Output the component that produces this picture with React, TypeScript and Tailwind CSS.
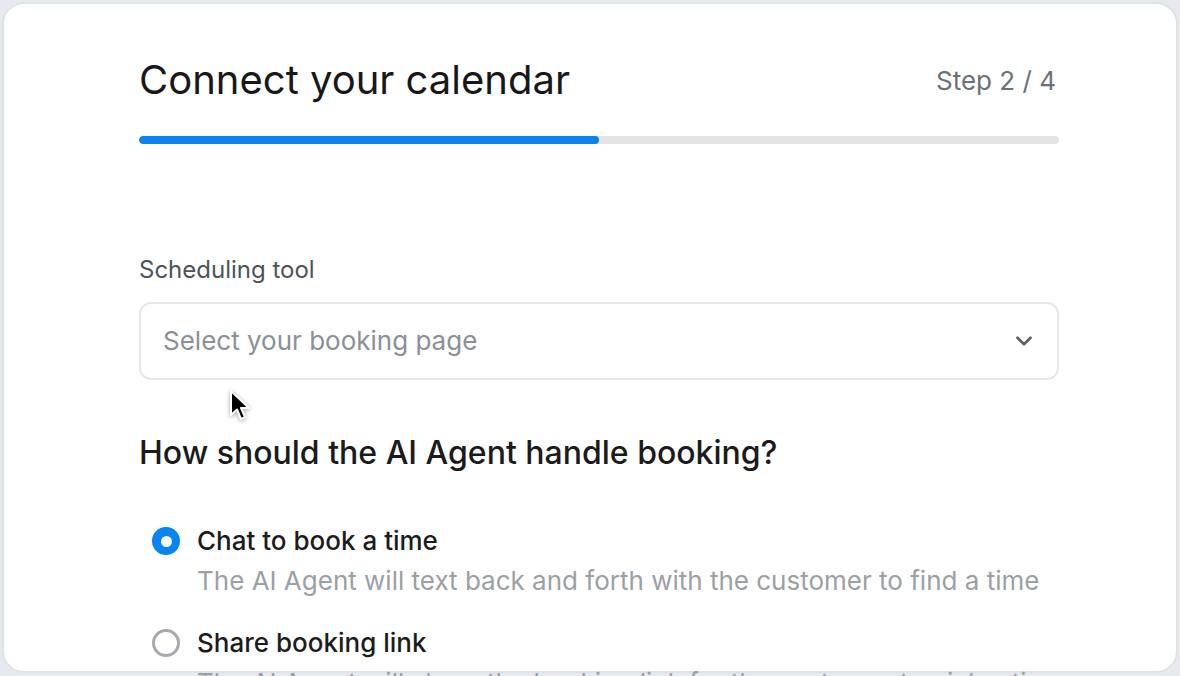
import React from 'react';
import { ChevronDown } from 'lucide-react';

type Option = {
  id: string;
  title: string;
  description: string;
};

const options: Option[] = [
  {
    id: 'chat',
    title: 'Chat to book a time',
    description: 'The AI Agent will text back and forth with the customer to find a time',
  },
  {
    id: 'link',
    title: 'Share booking link',
    description: 'The AI Agent will share the booking link for the customer to pick a time',
  },
];

function Radio({ checked }: { checked: boolean }) {
  if (checked) {
    return (
      <span className="flex h-[28px] w-[28px] shrink-0 items-center justify-center rounded-full bg-[#0a84f0]">
        <span className="h-[11px] w-[11px] rounded-full bg-white" />
      </span>
    );
  }
  return <span className="h-[28px] w-[28px] shrink-0 rounded-full border-[3px] border-[#a6aaae] bg-white" />;
}

function Cursor() {
  return (
    <svg
      className="pointer-events-none absolute left-[228px] top-[389px] drop-shadow-[0_1px_2px_rgba(0,0,0,0.35)]"
      width="26"
      height="34"
      viewBox="0 0 26 34"
    >
      <path
        d="M3 2 L3 26 L9 20.5 L13 30 L17 28.2 L13 19 L21 19 Z"
        fill="#000"
        stroke="#fff"
        strokeWidth="2"
        strokeLinejoin="round"
      />
    </svg>
  );
}

export default function App() {
  const [selected] = React.useState('chat');
  const step = 2;
  const total = 4;

  return (
    <div
      className="relative h-[676px] w-[1180px] overflow-hidden bg-[#e6eaef] p-[2px]"
      style={{ fontFamily: 'Inter, "Noto Sans", sans-serif' }}
    >
      <div className="h-[671px] rounded-[22px] border-2 border-[#dde3e9] bg-white pl-[135px] pt-[52px]">
        <div className="w-[920px]">
          <div className="flex items-center justify-between">
            <h1 className="text-[40px] leading-[48px] font-normal text-[#18181b]">Connect your calendar</h1>
            <span className="mr-[3px] mt-[2px] text-[26px] leading-[34px] text-[#6b7076]">
              Step {step} / {total}
            </span>
          </div>

          <div className="mt-[32px] h-[8px] w-full overflow-hidden rounded-full bg-[#e4e4e4]">
            <div className="h-full rounded-full bg-[#0a84f0]" style={{ width: `${(step / total) * 100}%` }} />
          </div>

          <label className="mt-[110px] block text-[24px] leading-[32px] text-[#4d535a]">Scheduling tool</label>
          <button className="mt-[16px] flex h-[78px] w-full items-center justify-between rounded-[12px] border-2 border-[#e6e7ea] bg-white pl-[22px] pr-[20px] text-left">
            <span className="text-[26px] leading-[34px] text-[#8a9098]">Select your booking page</span>
            <ChevronDown className="h-[26px] w-[26px] text-[#5b6066]" strokeWidth={2.4} />
          </button>

          <h2 className="mt-[53px] text-[32px] leading-[40px] font-medium text-[#1b1b1d]">
            How should the AI Agent handle booking?
          </h2>

          <div className="mt-[51px] flex flex-col gap-[28px]">
            {options.map((opt) => (
              <div key={opt.id} className="pl-[13px]">
                <div className="flex items-center gap-[17px]">
                  <Radio checked={selected === opt.id} />
                  <span className="text-[26px] leading-[34px] font-medium text-[#1c1c1e]">{opt.title}</span>
                </div>
                <p className="mt-[6px] whitespace-nowrap pl-[45px] text-[26px] leading-[34px] text-[#9aa0a6]">
                  {opt.description}
                </p>
              </div>
            ))}
          </div>
        </div>
      </div>
      <Cursor />
    </div>
  );
}
